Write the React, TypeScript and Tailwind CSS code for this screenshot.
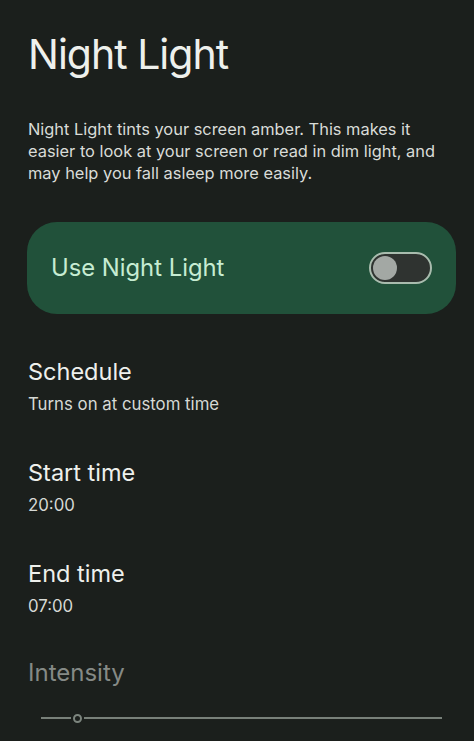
import React from 'react'

type Row = { title: string; sub: string }

const rows: Row[] = [
  { title: 'Schedule', sub: 'Turns on at custom time' },
  { title: 'Start time', sub: '20:00' },
  { title: 'End time', sub: '07:00' },
]

function Toggle() {
  return (
    <div className="w-[63px] h-[32px] rounded-full border-2 border-[#a9bcae] bg-[#2f3330] flex items-center px-[2px]">
      <div className="w-[24px] h-[24px] rounded-full bg-[#a3a8a4]" />
    </div>
  )
}

function IntensitySlider() {
  return (
    <div className="flex items-center pl-[41px] pr-[32px] h-[10px]">
      <div className="w-[30px] h-[2px] bg-[#788079]" />
      <div className="w-[9px] h-[9px] rounded-full border-2 border-[#7c857e] mx-[2px]" />
      <div className="flex-1 h-[2px] bg-[#788079]" />
    </div>
  )
}

export default function App() {
  return (
    <div
      className="w-[474px] h-[741px] overflow-hidden bg-[#1b1f1c] text-[#eef0ec]"
      style={{ fontFamily: 'Inter, Roboto, sans-serif' }}
    >
      <div className="px-[28px] pt-[26px]">
        <h1 className="text-[41px] leading-[56px] font-normal tracking-[-1px]">Night Light</h1>
        <p className="mt-[36px] text-[16.4px] leading-[22px] text-[#d9dcd8] -mr-[4px]">
          Night Light tints your screen amber. This makes it easier to look at your screen or read in dim
          light, and may help you fall asleep more easily.
        </p>
      </div>

      <div className="ml-[27px] mr-[18px] mt-[38px] h-[92px] rounded-[30px] bg-[#21513a] flex items-center justify-between pl-[24px] pr-[24px]">
        <span className="text-[23.8px] text-[#c6ecd2]">Use Night Light</span>
        <Toggle />
      </div>

      <div className="px-[28px] mt-[43px] flex flex-col gap-[42px]">
        {rows.map((r) => (
          <div key={r.title}>
            <div className="text-[23.5px] leading-[30px] text-[#eef0ec]">{r.title}</div>
            <div className="text-[16.8px] leading-[24px] mt-[5px] text-[#d6d9d5]">{r.sub}</div>
          </div>
        ))}
      </div>

      <div className="px-[28px] mt-[40px]">
        <div className="text-[24px] leading-[30px] text-[#858a86]">Intensity</div>
      </div>
      <div className="mt-[25px]">
        <IntensitySlider />
      </div>
    </div>
  )
}
